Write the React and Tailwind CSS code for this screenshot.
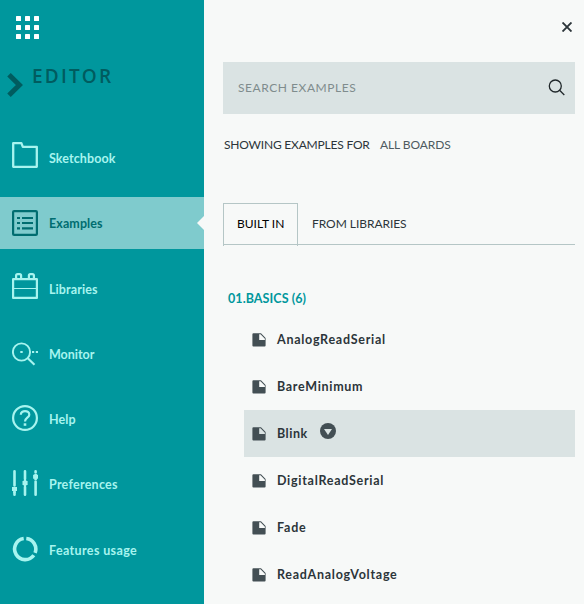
import React from "react";

const nav = [
  {
    label: "Sketchbook",
    icon: <path d="M1.2 24.8V1.2H9.4L10.8 4.8H24.8V24.8Z" strokeWidth="2.3" strokeLinejoin="round" />,
    iconClass: "mt-[10px]",
    textClass: "tracking-[0.1px]",
  },
  {
    label: "Examples",
    active: true,
    icon: (
      <>
        <rect x="1.1" y="1.1" width="23.8" height="23.8" rx="1" strokeWidth="2.2" />
        <path d="M5 8H8M5 13H8M5 18.3H8M10 8H21M10 13H21M10 18.3H21" strokeWidth="2.2" />
      </>
    ),
    iconClass: "mt-[13px]",
    textClass: "tracking-[0.1px]",
  },
  {
    label: "Libraries",
    icon: (
      <>
        <path d="M1.1 6.2H24.9V24.9H1.1Z" strokeWidth="2.2" strokeLinejoin="round" />
        <path d="M4.1 6V2.6Q4.1 1.1 5.6 1.1H7.6Q9.1 1.1 9.1 2.6V6M16.9 6V2.6Q16.9 1.1 18.4 1.1H20.4Q21.9 1.1 21.9 2.6V6" strokeWidth="2.2" />
        <path d="M1 15.5H25" strokeWidth="1" />
      </>
    ),
    iconClass: "mt-[10.7px]",
    textClass: "tracking-[0.1px]",
  },
  {
    label: "Monitor",
    icon: (
      <>
        <circle cx="9.5" cy="10" r="8.6" strokeWidth="1.9" />
        <path d="M15.8 16.2L22.5 22.8" strokeWidth="2.1" />
        <path d="M8.3 10H10.7M20 10H22.2M23.8 10H26" strokeWidth="2" />
      </>
    ),
    iconClass: "mt-[14px]",
    textClass: "tracking-[0px]",
  },
  {
    label: "Help",
    icon: (
      <>
        <circle cx="13" cy="13" r="11.9" strokeWidth="2.2" />
        <path d="M8.8 9.8C8.8 4.8 17.3 4.8 17.3 9.7C17.3 12.7 13 12.8 13 16.5" strokeWidth="2.2" />
        <path d="M13 18.3V20.8" strokeWidth="2.6" />
      </>
    ),
    iconClass: "mt-[12px]",
    textClass: "tracking-[0.1px]",
  },
  {
    label: "Preferences",
    icon: (
      <>
        <path d="M2.5 1.3V15.5M2.5 22.5V24.7M13 1.3V9M13 17V24.7M23.6 1.3V2.5M23.6 11.5V24.7" strokeWidth="2.6" strokeLinecap="round" />
        <path d="M0 19H5M10.5 13H15.6M21.1 6.8H26" strokeWidth="4" />
        <path d="M2.5 17V23M13 10V16M23.6 4V10" strokeWidth="2.6" />
      </>
    ),
    iconClass: "mt-[12px]",
    textClass: "tracking-[0.25px]",
  },
  {
    label: "Features usage",
    icon: (
      <path
        d="M14.3 2.5A10.6 10.6 0 0 1 23.1 16.8M21.8 19.2A10.6 10.6 0 1 1 11.7 2.5"
        strokeWidth="3.6"
      />
    ),
    iconClass: "mt-[12px]",
    textClass: "tracking-[0.37px]",
  },
];

const files = [
  { name: "AnalogReadSerial", cls: "tracking-[0.72px]" },
  { name: "BareMinimum", cls: "tracking-[0.7px]" },
  { name: "Blink", cls: "tracking-[0.5px]", selected: true },
  { name: "DigitalReadSerial", cls: "tracking-[0.72px]" },
  { name: "Fade", cls: "tracking-[0.8px]" },
  { name: "ReadAnalogVoltage", cls: "tracking-[0.72px]" },
];

function NavItem({ item }) {
  return (
    <li
      className={
        item.active
          ? "flex h-[52px] items-start bg-[#7fcbcd] pl-3 text-[#006d70]"
          : "flex h-[52px] items-start pl-3 text-[#a7f4ef]"
      }
    >
      <svg viewBox="0 0 26 26" className={`size-[26px] shrink-0 ${item.iconClass}`} fill="none" stroke="currentColor">
        {item.icon}
      </svg>
      <span className={`ml-[11px] text-[12.5px] leading-[53px] font-bold whitespace-nowrap ${item.textClass}`}>
        {item.label}
      </span>
      {item.active && (
        <svg viewBox="0 0 7 14" className="mt-[19px] ml-auto h-[14px] w-[7px]">
          <path d="M7 0V14L0 7Z" fill="#f7f9f8" />
        </svg>
      )}
    </li>
  );
}

export default function App() {
  return (
    <div className="flex h-[604px] w-[584px] overflow-hidden bg-[#f7f9f8] font-['Lato',sans-serif]">
      <aside className="w-[204px] shrink-0 bg-[#00979d]">
        <div className="grid w-fit grid-cols-[5px_5px_5px] gap-1 pt-4 pl-4">
          {Array.from({ length: 9 }, (_, i) => (
            <i key={i} className="size-[5px] rounded-[0.5px] bg-white" />
          ))}
        </div>
        <div className="mt-[26px] flex h-[67px] items-start pl-[7px] text-[#005c5f]">
          <svg viewBox="0 0 16 24" className="mt-[8px] h-6 w-4" fill="none" stroke="currentColor" strokeWidth="5">
            <path d="M2 1.8L12.4 12L2 22.2" />
          </svg>
          <h1 className="ml-[9px] font-['Open_Sans',sans-serif] text-[19px] leading-[22px] font-semibold tracking-[2.2px]">EDITOR</h1>
        </div>
        <ul className="flex flex-col gap-[13.3px]">
          {nav.map((item) => (
            <NavItem key={item.label} item={item} />
          ))}
        </ul>
      </aside>
      <main className="flex grow flex-col pr-[9px] pl-[19px] text-[#2c353a]">
        <button className="mt-[22px] mr-[3px] self-end">
          <svg viewBox="0 0 10 10" className="size-[10px]" fill="none" stroke="#2c353a" strokeWidth="1.9">
            <path d="M0.5 0.5L9.5 9.5M9.5 0.5L0.5 9.5" />
          </svg>
        </button>
        <div className="mt-[30px] flex h-[52px] shrink-0 items-center justify-between bg-[#dae3e3] pr-[10px] pl-[15px]">
          <span className="text-[12px] tracking-[0.55px] text-[#7f8c8d]">SEARCH EXAMPLES</span>
          <svg viewBox="0 0 17 17" className="mb-[2px] size-[17px]" fill="none" stroke="#1f272a" strokeWidth="1.3">
            <circle cx="7.3" cy="7" r="6" />
            <path d="M11.6 11.3L16.3 16" />
          </svg>
        </div>
        <div className="mt-[21px] flex h-5 items-center pl-px text-[12px] whitespace-nowrap">
          <span className="w-[146px] tracking-[-0.2px]">SHOWING EXAMPLES FOR</span>
          <span className="ml-[10px] tracking-[-0.1px] text-[#4e5b61]">ALL BOARDS</span>
        </div>
        <div className="mt-[48px] flex h-[42px] shrink-0 border-b border-[#b5c6c6] text-[12px] leading-[40px] whitespace-nowrap">
          <div className="-mb-[2px] h-[43px] w-[75px] border border-b-0 border-[#b5c6c6] pl-[13px] text-black">BUILT IN</div>
          <div className="pt-px pl-[14px] tracking-[-0.05px]">FROM LIBRARIES</div>
        </div>
        <h2 className="mt-[44px] h-[27px] pl-[5px] text-[12.5px] leading-5 font-bold tracking-[0.07px] text-[#00979d]">01.BASICS (6)</h2>
        <ul className="ml-[21px]">
          {files.map((f) => (
            <li key={f.name} className={f.selected ? "flex h-[47px] items-center bg-[#dae3e3] pl-2" : "flex h-[47px] items-center pl-2"}>
              <svg viewBox="0 0 14 14" className="size-[14px] shrink-0">
                <path fillRule="evenodd" fill="#434f54" d="M1 .3H9L13.6 5V12.6Q13.6 13.6 12.6 13.6H1.4Q.4 13.6 .4 12.6V1.3Q.4 .3 1.4 .3ZM7.2 1.3V7H12.9V5.7L8.5 1.3Z" />
              </svg>
              <span className={`ml-[11px] pt-[2px] text-[12.5px] font-bold ${f.cls}`}>{f.name}</span>
              {f.selected && (
                <svg viewBox="0 0 16 16" className="mb-[5px] ml-3 size-4">
                  <circle cx="8" cy="8" r="8" fill="#434f54" />
                  <path d="M4 6H12L8 12Z" fill="#dae3e3" />
                </svg>
              )}
            </li>
          ))}
        </ul>
      </main>
    </div>
  );
}
